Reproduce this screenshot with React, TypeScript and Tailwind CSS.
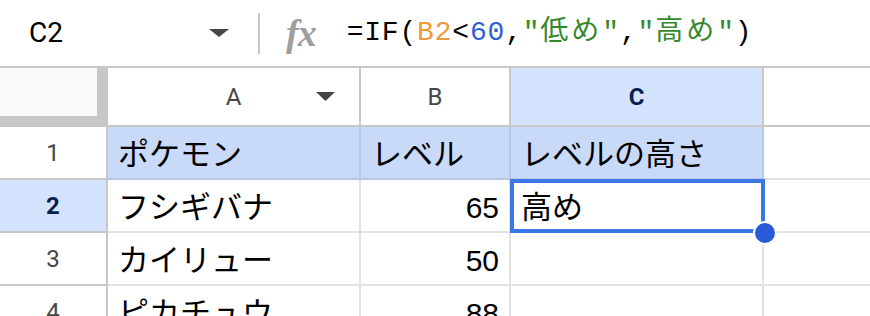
import React from "react";

const Tri = ({ w = 20, h = 8, color = "#444746" }: { w?: number; h?: number; color?: string }) => (
  <svg width={w} height={h} viewBox={`0 0 ${w} ${h}`}>
    <polygon points={`0,0 ${w},0 ${w / 2},${h}`} fill={color} />
  </svg>
);

const cellFont = { fontFamily: '"Liberation Sans", "Noto Sans CJK JP", sans-serif' };
const hdrFont = { fontFamily: 'Roboto, "Liberation Sans", sans-serif' };

function RowHeader({ n, active }: { n: number; active?: boolean }) {
  return (
    <div
      style={hdrFont}
      className={`w-[108px] shrink-0 h-full border-r-2 border-b-2 border-[#c7c7c7] flex items-center justify-center text-[24px] ${
        active ? "bg-[#d3e3fd] text-[#0b1f4f] font-bold" : "bg-white text-[#444746]"
      }`}
    >
      {n}
    </div>
  );
}

function Cell({
  w,
  children,
  right,
  blue,
  size = "text-[31px]",
}: {
  w: string;
  children?: React.ReactNode;
  right?: boolean;
  blue?: boolean;
  size?: string;
}) {
  return (
    <div
      style={cellFont}
      className={`${w} shrink-0 h-full border-r-2 border-b-2 flex items-end pb-[5px] px-[10px] leading-[36px] text-black ${size} ${
        right ? "justify-end" : "justify-start"
      } ${blue ? "bg-[#c9daf8] border-[#b7c6e3]" : "bg-white border-[#e1e1e1]"}`}
    >
      {children}
    </div>
  );
}

function Row({
  n,
  active,
  a,
  b,
  c,
  blue,
}: {
  n: number;
  active?: boolean;
  a?: string;
  b?: string;
  c?: string;
  blue?: boolean;
}) {
  return (
    <div className="flex h-[53px]">
      <RowHeader n={n} active={active} />
      <Cell w="w-[253px]" blue={blue}>
        {a}
      </Cell>
      <Cell w="w-[150px]" blue={blue} right={!blue} size={blue ? "text-[31px]" : "text-[30px]"}>
        {b}
      </Cell>
      <Cell w="w-[253px]" blue={blue}>
        {c}
      </Cell>
      <div className="flex-1 h-full border-b-2 border-[#e1e1e1] bg-white" />
    </div>
  );
}

export default function App() {
  return (
    <div className="w-[870px] h-[316px] overflow-hidden bg-white relative">
      {/* formula bar */}
      <div className="flex items-center h-[68px] border-b-2 border-[#c7c7c7]">
        <div className="w-[258px] shrink-0 flex items-center justify-between pl-[29px] pr-[29px]">
          <span style={hdrFont} className="text-[28px] text-black">
            C2
          </span>
          <Tri w={20} h={8} />
        </div>
        <div className="w-[2px] h-[41px] bg-[#c7c7c7] shrink-0" />
        <span
          className="ml-[26px] text-[#9e9e9e] italic font-bold text-[38px] leading-none tracking-[-1px]"
          style={{ fontFamily: '"Liberation Serif", serif' }}
        >
          fx
        </span>
        <div
          className="ml-[31px] text-[28px] tracking-[0.8px] text-black whitespace-pre"
          style={{ fontFamily: '"Liberation Mono", "Noto Sans CJK JP", monospace' }}
        >
          =IF(<span className="text-[#ee9a3a]">B2</span>&lt;<span className="text-[#2f5fd0]">60</span>,
          <span className="text-[#35892d]">
            "<span className="tracking-[3px]">低め</span>"
          </span>
          ,
          <span className="text-[#35892d]">
            "<span className="tracking-[3px]">高め</span>"
          </span>
          )
        </div>
      </div>

      {/* column headers */}
      <div className="flex h-[59px]">
        <div className="w-[108px] shrink-0 h-full bg-[#c7c7c7]">
          <div className="w-[97px] h-[48px] bg-[#f8f9fa]" />
        </div>
        <div
          style={hdrFont}
          className="relative w-[253px] shrink-0 h-full border-r-2 border-b-2 border-[#c7c7c7] flex items-center justify-center text-[24px] text-[#444746]"
        >
          A
          <div className="absolute left-[208px] top-[24px] flex">
            <Tri w={19} h={9} />
          </div>
        </div>
        <div
          style={hdrFont}
          className="w-[150px] shrink-0 h-full border-r-2 border-b-2 border-[#c7c7c7] flex items-center justify-center text-[24px] text-[#444746]"
        >
          B
        </div>
        <div
          style={hdrFont}
          className="w-[253px] shrink-0 h-full border-r-2 border-b-2 border-[#c7c7c7] bg-[#d3e3fd] flex items-center justify-center text-[24px] font-bold text-[#0b1f4f]"
        >
          C
        </div>
        <div className="flex-1 h-full border-b-2 border-[#c7c7c7]" />
      </div>

      <Row n={1} a="ポケモン" b="レベル" c="レベルの高さ" blue />
      <Row n={2} a="フシギバナ" b="65" c="高め" active />
      <Row n={3} a="カイリュー" b="50" />
      <Row n={4} a="ピカチュウ" b="88" />

      {/* selection */}
      <div className="absolute left-[510px] top-[179px] w-[255px] h-[54px] border-4 border-[#3b78e7]" />
      <div className="absolute left-[753px] top-[221px] w-[24px] h-[24px] rounded-full bg-[#2a5bd7] border-2 border-white" />
    </div>
  );
}
